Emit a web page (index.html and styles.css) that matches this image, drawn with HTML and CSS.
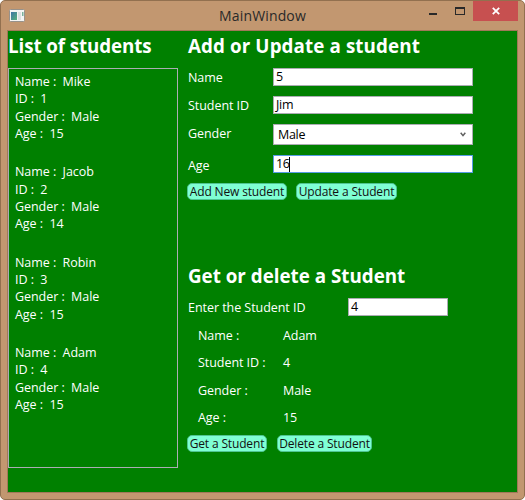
FILE: index.html
```
<!DOCTYPE html>
<html lang="en">
<head>
<meta charset="utf-8">
<title>MainWindow</title>
<link rel="stylesheet" href="styles.css">
</head>
<body>
<div class="window">
  <header class="titlebar">
    <svg class="app-icon" width="16" height="14" viewBox="0 0 16 14">
      <defs><linearGradient id="pane" x1="0" y1="0" x2="1" y2="1"><stop offset="0" stop-color="#3e75a5"/><stop offset="1" stop-color="#58b27b"/></linearGradient></defs>
      <rect x=".5" y=".5" width="15" height="12" rx="1" fill="#f5f5f3" stroke="#98928b"/>
      <rect x="2" y="3" width="6" height="8" fill="url(#pane)"/>
      <rect x="9" y="3" width="3" height="8" fill="#dce0e0"/>
      <rect x="13" y="3" width="1.5" height="4" fill="#79b29c"/>
    </svg>
    <h1 class="title">MainWindow</h1>
    <div class="controls">
      <svg class="minmax" width="40" height="20" viewBox="0 0 40 20" shape-rendering="crispEdges">
        <rect x="1" y="12" width="8" height="2" fill="#292929"/>
        <path d="M27 6h10v8H27zM28 8v5h8V8z" fill="#292929" fill-rule="evenodd"/>
      </svg>
      <div class="close">
        <svg width="8" height="8" viewBox="0 0 8 8"><path d="M.8.8l6.4 6.4M7.2.8L.8 7.2" stroke="#fff" stroke-width="1.8"/></svg>
      </div>
    </div>
  </header>
  <main class="client">
    <section class="list-pane">
      <h2 class="h-list">List of students</h2>
      <div class="list">
        <div class="student"><p>Name :&nbsp; Mike</p><p>ID :&nbsp; 1</p><p>Gender :&nbsp; Male</p><p>Age :&nbsp; 15</p></div>
        <div class="student"><p>Name :&nbsp; Jacob</p><p>ID :&nbsp; 2</p><p>Gender :&nbsp; Male</p><p>Age :&nbsp; 14</p></div>
        <div class="student"><p>Name :&nbsp; Robin</p><p>ID :&nbsp; 3</p><p>Gender :&nbsp; Male</p><p>Age :&nbsp; 15</p></div>
        <div class="student"><p>Name :&nbsp; Adam</p><p>ID :&nbsp; 4</p><p>Gender :&nbsp; Male</p><p>Age :&nbsp; 15</p></div>
      </div>
    </section>
    <div class="forms">
      <section class="edit">
        <h2>Add or Update a student</h2>
        <div class="fields">
          <span class="label">Name</span><div class="box">5</div>
          <span class="label">Student ID</span><div class="box">Jim</div>
          <span class="label gender-label">Gender</span>
          <div class="box combo">Male<svg width="6" height="5" viewBox="0 0 6 5"><path d="M.7.7L3 3.6 5.3.7" fill="none" stroke="#606060" stroke-width="1.5"/></svg></div>
          <span class="label age-label">Age</span><div class="box focused">16<i class="caret"></i></div>
        </div>
        <div class="buttons"><div class="btn add">Add New student</div><div class="btn update">Update a Student</div></div>
      </section>
      <section class="lookup">
        <h2>Get or delete a Student</h2>
        <div class="query"><span class="label">Enter the Student ID</span><div class="box">4</div></div>
        <div class="details">
          <span>Name :</span><span>Adam</span>
          <span>Student ID :</span><span>4</span>
          <span>Gender :</span><span>Male</span>
          <span>Age :</span><span>15</span>
        </div>
        <div class="buttons"><div class="btn get">Get a Student</div><div class="btn delete">Delete a Student</div></div>
      </section>
    </div>
  </main>
</div>
</body>
</html>
```
FILE: styles.css
```
* { box-sizing: border-box; }
body { margin: 0; background: #fff; }
h1, h2, p { margin: 0; }

.window {
  width: 525px;
  height: 500px;
  padding: 0 6px 6px;
  border: 1px solid #92704f;
  border-radius: 5px;
  background: #c29770;
  color: #fff;
  font: 12.5px/17.3px "Open Sans", "Noto Sans", sans-serif;
  letter-spacing: -0.05px;
  white-space: nowrap;
  overflow: hidden;
}

.titlebar { display: grid; grid-template-columns: 1fr auto 1fr; height: 29px; align-items: start; }
.app-icon { margin: 8px 0 0 2px; }
.title { color: #292929; font-size: 14px; font-weight: 400; line-height: 29px; letter-spacing: 0.15px; }
.controls { display: flex; justify-content: flex-end; }
.minmax { margin-right: 5px; }
.close { display: flex; align-items: center; justify-content: center; width: 45px; height: 20px; background: #c75050; }

.client { display: flex; height: 463px; border: 1px solid #a17859; background: #008000; }
h2 { font-size: 18.8px; font-weight: 700; line-height: 30px; letter-spacing: 0.1px; }
.h-list { letter-spacing: -0.1px; }
.lookup h2 { letter-spacing: 0; }

.list-pane { width: 170px; }
.list { height: 400px; margin-top: 7px; padding: 4px 6px; border: 1px solid #abadb3; }
.student { height: 90.4px; }

.forms { padding-left: 10px; }
.edit { height: 230px; }
.fields {
  display: grid;
  grid-template-columns: 85px 200px;
  grid-template-rows: 18px 18px 21px 18px;
  row-gap: 10px;
  padding-top: 7px;
  align-items: center;
}
.label { padding-top: 2px; }
.gender-label { margin-top: -3px; }
.age-label { margin-top: 2px; }
.box { display: flex; align-items: center; height: 18px; padding-left: 2px; border: 1px solid #abadb3; background: #fff; color: #000; letter-spacing: -0.3px; }
.combo { height: 21px; justify-content: space-between; padding: 1px 6px 0 4px; letter-spacing: -0.3px; }
.combo svg { margin-bottom: 2px; }
.focused { border-color: #569de5; }
.caret { width: 1px; height: 15px; margin-left: -1px; background: #000; }

.buttons { display: flex; margin-left: -1px; }
.edit .buttons { padding-top: 10px; }
.btn { height: 17px; border: 1px solid #4fc592; border-radius: 5px; background: #7fffd4; color: #111; font-size: 12px; line-height: 15px; letter-spacing: -0.15px; text-align: center; }
.add { width: 100px; margin-right: 9px; }
.update { width: 101px; }
.get { width: 80px; margin-right: 10px; }
.delete { width: 95px; }

.query { display: grid; grid-template-columns: 160px 100px; grid-template-rows: 18px; padding-top: 7px; align-items: center; }
.details { display: grid; grid-template-columns: 85px 1fr; grid-auto-rows: 27.4px; padding: 6px 0 0 10px; align-items: center; height: 119px; }
```
